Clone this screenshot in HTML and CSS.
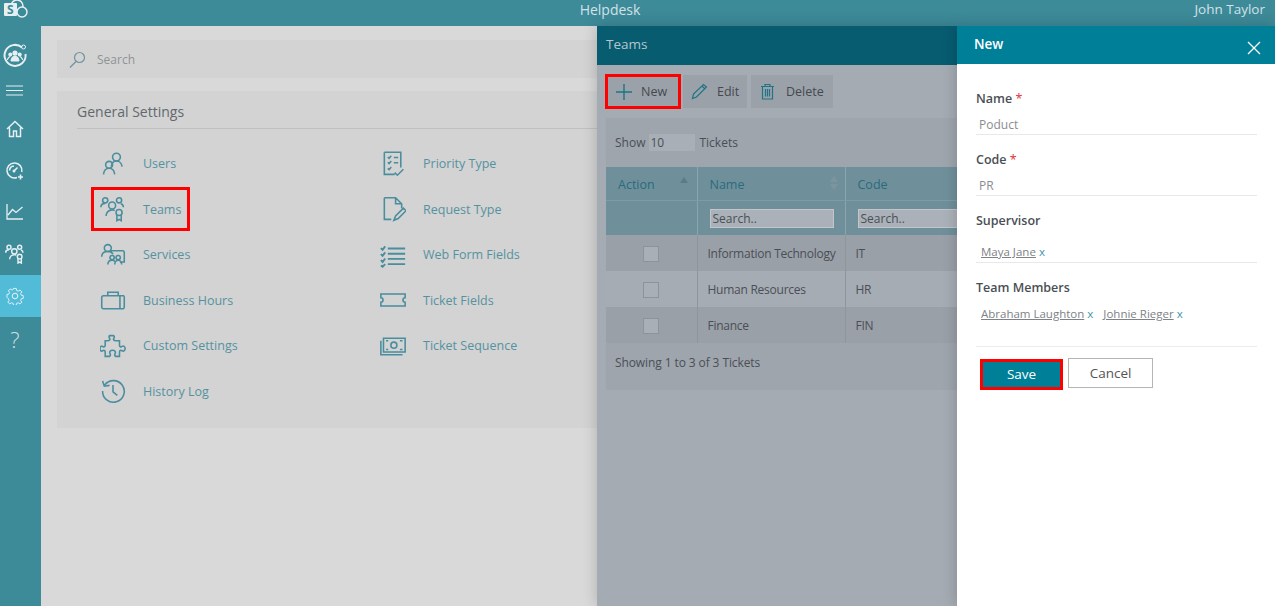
FILE: index.html
```html
<!DOCTYPE html>
<html>

<head>
    <link rel="stylesheet" href="styles.css">
</head>

<body>
    <header class="topbar">
        <svg class="logo" width="24" height="20" viewBox="0 0 24 20">
            <circle cx="13" cy="6" r="6" fill="none" stroke="#e6f0f2" stroke-width="1.500"/>
            <circle cx="18" cy="12" r="5" fill="#3d8a99" stroke="#e6f0f2" stroke-width="1.500"/>
            <rect x="0" y="3" width="13" height="13" rx="1" fill="#e6f0f2"/>
            <text x="3" y="14" class="logo-s">S</text>
        </svg>
        <span class="app-title">Helpdesk</span>
        <span class="user-name">John Taylor</span>
    </header>

    <div class="app">
        <nav class="sidebar">
            <a class="side-item side-profile">
                <svg width="26" height="26" viewBox="0 0 26 26">
                    <path d="M20 5.500A10.500 10.500 0 1 0 23.500 12" fill="none" stroke="#e6f0f2" stroke-width="2"/>
                    <circle cx="21.500" cy="5" r="2" fill="none" stroke="#e6f0f2"/>
                    <circle cx="13" cy="11" r="2.600" fill="#e6f0f2"/>
                    <circle cx="8.300" cy="12.500" r="2" fill="#e6f0f2"/>
                    <circle cx="17.700" cy="12.500" r="2" fill="#e6f0f2"/>
                    <path d="M9 19c0-3.500 2-5 4-5s4 1.500 4 5zM5.500 18c0-2 1-3.500 2.800-3.500M20.500 18c0-2-1-3.500-2.800-3.500" fill="#e6f0f2" stroke="#e6f0f2"/>
                </svg>
            </a>
            <a class="side-item side-menu">
                <svg width="18" height="11" viewBox="0 0 18 11"><path d="M0 1h17M0 5.500h17M0 10h17" stroke="#e6f0f2" fill="none"/></svg>
            </a>
            <a class="side-item">
                <svg width="18" height="18" viewBox="0 0 18 18"><path d="M1 9 9 1.500 17 9M3.500 7.500V16.500H7.500V11H10.500V16.500H14.500V7.500" fill="none" stroke="#e6f0f2" stroke-width="1.500"/></svg>
            </a>
            <a class="side-item">
                <svg width="20" height="20" viewBox="0 0 20 20"><path d="M12 16.500A7.500 7.500 0 1 1 16.800 11M4.500 9.500A5 5 0 0 1 9 5M9 10l3.500-3.500M15.500 13.500v5M13 16h5" fill="none" stroke="#e6f0f2" stroke-width="1.600"/><circle cx="9" cy="10" r="1.500" fill="#e6f0f2"/></svg>
            </a>
            <a class="side-item">
                <svg width="18" height="16" viewBox="0 0 18 16"><path d="M1 0V15H17M2 11 6.500 5.500 10 8.500 16.500 3" fill="none" stroke="#e6f0f2" stroke-width="1.300"/></svg>
            </a>
            <a class="side-item">
                <svg width="20" height="20" viewBox="0 0 30 30" class="icon-light"><use href="#i-teams"/></svg>
            </a>
            <a class="side-item active">
                <svg width="18" height="18" viewBox="0 0 18 18"><circle cx="9" cy="9" r="2.800" fill="none" stroke="#e6f5f8"/><path d="M7.500 1h3l.4 2.300 1.700.7 1.900-1.300 2 2-1.300 1.900.7 1.700 2.100.4v3l-2.100.4-.7 1.700 1.300 1.900-2 2-1.900-1.300-1.700.7-.4 2.100h-3l-.4-2.100-1.700-.7-1.900 1.300-2-2 1.300-1.900-.7-1.700L.5 10.500v-3l2.100-.4.7-1.700L2 3.500l2-2 1.900 1.300 1.200-.7z" transform="translate(.5 .5) scale(.93)" fill="none" stroke="#e6f5f8"/></svg>
            </a>
            <a class="side-item side-help">?</a>
        </nav>

        <main class="content">
            <div class="search-bar">
                <svg width="17" height="17" viewBox="0 0 17 17"><circle cx="10.500" cy="6.500" r="5" fill="none" stroke="#6f949d" stroke-width="1.200"/><path d="M7 10.500 1 16.500" stroke="#6f949d" fill="none" stroke-width="1.200"/></svg>
                <span>Search</span>
            </div>
            <section class="settings-card">
                <h2>General Settings</h2>
                <div class="settings-grid">
                    <a class="setting">
                        <svg viewBox="0 0 30 30"><circle cx="19" cy="7" r="4.500"/><path d="M13 18c.5-4 3-6.500 6-6.500s6 2.500 6.500 6.500"/><circle cx="10.500" cy="16" r="4"/><path d="M4 27c.5-4 3-7 6.500-7s6 3 6.500 7"/></svg>
                        <span>Users</span>
                    </a>
                    <a class="setting">
                        <svg viewBox="0 0 30 30"><use href="#i-priority"/></svg>
                        <span>Priority Type</span>
                    </a>
                    <a class="setting marked">
                        <svg viewBox="0 0 30 30"><use href="#i-teams"/></svg>
                        <span>Teams</span>
                    </a>
                    <a class="setting">
                        <svg viewBox="0 0 30 30"><path d="M5 2h13l7 7v5M5 2v25h8M18 2v7h7M16 28l2-5 9-9 3 3-9 9z"/></svg>
                        <span>Request Type</span>
                    </a>
                    <a class="setting">
                        <svg viewBox="0 0 30 30"><circle cx="9" cy="7" r="4"/><path d="M2 17c0-4 3-6 7-6 3 0 5 1 6 3M13 13V10h13a2 2 0 0 1 2 2v11h-5"/><circle cx="14" cy="18" r="2.500"/><circle cx="21" cy="18" r="2.500"/><path d="M9 26c0-3 2-5 5-5 2 0 3 1 3.500 2M17 26c0-3 2-5 4-5s4 2 4 5"/></svg>
                        <span>Services</span>
                    </a>
                    <a class="setting">
                        <svg viewBox="0 0 30 30"><path d="M1 7l2 2 3-4M1 14l2 2 3-4M1 21l2 2 3-4M1 27l2 1.500 3-3M9 7.500h20M9 13.500h20M9 19.500h20M9 25.500h20" stroke-width="2.200"/></svg>
                        <span>Web Form Fields</span>
                    </a>
                    <a class="setting">
                        <svg viewBox="0 0 30 30"><path d="M4 10h23a2 2 0 0 1 1 2v11a2 2 0 0 1-1 2H4a2 2 0 0 1-2-2V12a2 2 0 0 1 2-2zM9 10V6h12v4M23 10v15"/></svg>
                        <span>Business Hours</span>
                    </a>
                    <a class="setting">
                        <svg viewBox="0 0 30 30"><path d="M1 8h28v4.500a2.500 2.500 0 0 0 0 5V22H1v-4.500a2.500 2.500 0 0 0 0-5z"/></svg>
                        <span>Ticket Fields</span>
                    </a>
                    <a class="setting">
                        <svg viewBox="0 0 30 30"><path d="M11 3h4c1.500 0 2 1.500 1 3-1 1.500 0 3 2 3h4.500v5c0 2 1.500 2.500 3 1.500s3.500 0 3.500 2.500-2 3.500-3.500 2.500-3-.5-3 1.500v5H18c-1.500-1-1-2.500-.5-3.500 1-2-.5-3.500-3-3.500s-4 1.500-3 3.500c.5 1 1 2.500-.5 3.500H6v-5c0-2-1.500-2.500-3-1.500S0 20.500 0 18s2-3.500 3-2.500 3 .5 3-1.500V9h3c2 0 3-1.500 2-3-1-1.500-.5-3 0-3z"/></svg>
                        <span>Custom Settings</span>
                    </a>
                    <a class="setting">
                        <svg viewBox="0 0 30 30"><path d="M4 6h25v16H4zM1 9v16h25"/><circle cx="16" cy="14" r="3.500"/><path d="M7 9h2.500M7 19h2.500M23 9h3M23 19h3"/></svg>
                        <span>Ticket Sequence</span>
                    </a>
                    <a class="setting">
                        <svg viewBox="0 0 30 30"><path d="M5.500 8A12.500 12.500 0 1 1 3 15M3 3.500 5 9.500 11 8.500M15 8V16l5 4"/></svg>
                        <span>History Log</span>
                    </a>
                </div>
            </section>
        </main>
    </div>

    <aside class="drawer drawer-teams">
        <div class="drawer-head">Teams</div>
        <div class="toolbar">
            <button class="tool tool-new">
                <svg width="18" height="18" viewBox="0 0 18 18"><path d="M9 1V17M1 9H17" stroke="#1f7486" fill="none" stroke-width="1.400"/></svg>New
            </button>
            <button class="tool tool-edit">
                <svg width="17" height="17" viewBox="0 0 17 17"><path d="M1.500 15.500 2.500 11 12.500 1.500 15.500 4 5.500 14zM11 3l3 3" stroke="#1f7486" fill="none" stroke-width="1.200"/></svg>Edit
            </button>
            <button class="tool tool-delete">
                <svg width="15" height="17" viewBox="0 0 15 17"><path d="M1 3.500H14M5 3.500V1.500H10V3.500M2.500 3.500V16H12.500V3.500M5.500 6V13.500M7.500 6V13.500M9.500 6V13.500" stroke="#1f7486" fill="none" stroke-width="1.200"/></svg>Delete
            </button>
        </div>
        <div class="grid-box">
            <div class="grid-show">Show <span class="page-size">10</span> Tickets</div>
            <table class="grid">
                <thead>
                    <tr class="grid-titles">
                        <th class="col-action">Action<i class="sort-up"></i></th>
                        <th class="col-name">Name<i class="sort-both"></i></th>
                        <th>Code</th>
                    </tr>
                    <tr class="grid-filters">
                        <th></th>
                        <th><span class="filter">Search..</span></th>
                        <th><span class="filter">Search..</span></th>
                    </tr>
                </thead>
                <tbody>
                    <tr><td><i class="check"></i></td><td>Information Technology</td><td>IT</td></tr>
                    <tr><td><i class="check"></i></td><td>Human Resources</td><td>HR</td></tr>
                    <tr><td><i class="check"></i></td><td>Finance</td><td>FIN</td></tr>
                </tbody>
            </table>
            <div class="grid-foot">Showing 1 to 3 of 3 Tickets</div>
        </div>
    </aside>

    <aside class="drawer drawer-new">
        <div class="drawer-head">
            New
            <svg width="14" height="14" viewBox="0 0 14 14"><path d="M1 1 13 13M13 1 1 13" stroke="#fff" stroke-width="1.300" fill="none"/></svg>
        </div>
        <form class="new-form">
            <div class="field">
                <label>Name <b>*</b></label>
                <div class="value">Poduct</div>
            </div>
            <div class="field">
                <label>Code <b>*</b></label>
                <div class="value">PR</div>
            </div>
            <div class="field field-people">
                <label>Supervisor</label>
                <div class="value"><u>Maya Jane</u> <em>x</em></div>
            </div>
            <div class="field field-members">
                <label>Team Members</label>
                <div class="value"><u>Abraham Laughton</u> <em>x</em><u class="next">Johnie Rieger</u> <em>x</em></div>
            </div>
            <div class="form-actions">
                <button type="button" class="btn-save">Save</button>
                <button type="button" class="btn-cancel">Cancel</button>
            </div>
        </form>
    </aside>

    <svg class="defs" width="0" height="0">
        <symbol id="i-teams" viewBox="0 0 30 30">
            <circle cx="6" cy="5" r="3"/><circle cx="22" cy="5" r="3"/><circle cx="14" cy="11" r="4"/>
            <path d="M1 13c0-3 2-4.500 5-4.500M27 13c0-2-1-3.500-3-4M7 23c0-4 3-7 7-7 1 0 2 .2 3 .6"/>
            <circle cx="22" cy="19" r="3.500"/><path d="M19.500 22v6.500L22 27l2.500 1.500V22"/>
        </symbol>
        <symbol id="i-priority" viewBox="0 0 30 30">
            <path d="M5 1.500H24V19M5 1.500V27H17M9 7l1.500 1.500L13 5.500M9 13l1.500 1.500L13 11.500M9 20l1.500 1.500L13 18.500M16 7.500h5M16 13.500h5M17 25l3 3 7-7"/>
        </symbol>
    </svg>
</body>

</html>
```

FILE: styles.css
```css
* {
    box-sizing: border-box;
}

html,
body {
    margin: 0;
    height: 606px;
    overflow: hidden;
}

body {
    font-family: "Open Sans", "Noto Sans", sans-serif;
    font-size: 12.5px;
    color: #4a4f55;
    display: flex;
    flex-direction: column;
}

/* top bar */
.topbar {
    height: 26px;
    flex: none;
    background: #3d8a99;
    color: #d3e2e6;
    font-size: 14px;
    display: flex;
    align-items: center;
    justify-content: center;
    padding-bottom: 8px;
    position: relative;
}

.logo {
    position: absolute;
    left: 4px;
    top: 0;
}

.logo-s {
    font-size: 12px;
    font-weight: 700;
    fill: #3d8a99;
}

.app-title {
    margin-right: 55px;
}

.user-name {
    position: absolute;
    right: 10px;
    top: 0;
    font-size: 13.500px;
}

/* page behind the drawers */
.app {
    flex: 1;
    display: flex;
    min-height: 0;
}

.sidebar {
    width: 41px;
    flex: none;
    background: #3d8a99;
    display: flex;
    flex-direction: column;
    padding-top: 8px;
}

.side-item {
    height: 41.750px;
    flex: none;
    display: flex;
    align-items: center;
    justify-content: center;
    padding-right: 11px;
}

.side-profile {
    height: 42px;
}

.side-menu {
    height: 28px;
    margin-bottom: 4px;
}

.icon-light {
    fill: none;
    stroke: #e6f0f2;
    stroke-width: 2.200;
}

.side-item.active {
    background: #52bcd8;
}

.side-help {
    color: #cfe0e4;
    font-size: 22px;
    font-weight: 300;
    padding-top: 3px;
}

.content {
    flex: 1;
    background: #d9d9d9;
    padding: 14px 0 0 16px;
    display: flex;
    flex-direction: column;
    gap: 13px;
}

.search-bar {
    height: 38px;
    background: #d3d3d3;
    display: flex;
    align-items: center;
    gap: 11px;
    padding-left: 12px;
    color: #8e9496;
    font-size: 12px;
}

.settings-card {
    height: 337px;
    background: #d3d3d3;
    padding: 0 0 0 20px;
}

.settings-card h2 {
    margin: 0;
    height: 38px;
    line-height: 41px;
    font-size: 14px;
    font-weight: 400;
    color: #62686c;
    border-bottom: 1px solid #bfc1c1;
}

.settings-grid {
    display: grid;
    grid-template-columns: 280px 200px;
    grid-auto-rows: 45.500px;
    margin-top: 12.500px;
}

.setting {
    display: flex;
    align-items: center;
    gap: 17px;
    padding-left: 9px;
    color: #5592a1;
    height: 44px;
    width: 99px;
    margin-left: 14px;
    white-space: nowrap;
}

.setting svg {
    width: 26px;
    height: 26px;
    flex: none;
    fill: none;
    stroke: #4a8d9d;
    stroke-width: 1.800;
}

.setting.marked {
    outline: 3px solid #f00;
    outline-offset: -3px;
}

/* drawers lie over the page */
.drawer {
    position: absolute;
    top: 26px;
    bottom: 0;
    box-shadow: 0 0 14px rgba(0, 0, 0, .2);
}

.drawer-head {
    height: 39px;
    padding-left: 9px;
    line-height: 36px;
    font-size: 13.500px;
}

.drawer-teams {
    left: 597px;
    width: 360px;
    background: #a5abb3;
    overflow: hidden;
}

.drawer-teams .drawer-head {
    background: #075c70;
    color: #b5c7cc;
}

.toolbar {
    display: flex;
    gap: 3px;
    margin: 10px 0 10px 9px;
    height: 33px;
}

.tool {
    border: 0;
    background: #9ba1a9;
    color: #44494f;
    font: inherit;
    display: flex;
    align-items: center;
    height: 33px;
}

.tool-new {
    width: 74px;
    padding: 0 0 0 9px;
    gap: 8px;
    outline: 3px solid #f00;
    outline-offset: -2px;
}

.tool-edit {
    width: 64px;
    padding: 0 0 0 8px;
    gap: 9px;
}

.tool-delete {
    width: 82px;
    margin-left: 1px;
    padding: 0 0 0 9px;
    gap: 11px;
}

.grid-box {
    margin-left: 9px;
    background: #9ea5ad;
    height: 272px;
    font-size: 12px;
}

.grid-show {
    height: 49px;
    padding-left: 9px;
    display: flex;
    align-items: center;
    gap: 4px;
}

.page-size {
    width: 46px;
    height: 17px;
    line-height: 17px;
    background: #a9afb6;
    padding-left: 1px;
}

.grid {
    border-collapse: collapse;
    table-layout: fixed;
    width: 351px;
}

.grid th {
    font-weight: 400;
    text-align: left;
    background: #6f909b;
    color: #2a6b7c;
    padding: 0 0 0 12px;
    position: relative;
    border-right: 1px solid #8aa5ae;
}

.grid td {
    height: 36px;
    padding: 0 0 0 10px;
    border-right: 1px solid #8f959d;
    white-space: nowrap;
    letter-spacing: -.25px;
}

.grid tr:nth-child(odd) td {
    background: #9aa0a8;
}

.grid tr:nth-child(even) td {
    background: #a6acb4;
}

.grid td:first-child {
    text-align: center;
    padding: 0;
}

.grid th:last-child,
.grid td:last-child {
    border-right: 0;
}

.col-action {
    width: 91px;
}

.col-name {
    width: 148px;
}

.grid-titles th {
    height: 33px;
    font-size: 12.500px;
    padding-top: 2px;
    border-bottom: 1px solid #7f9ca6;
}

.grid-filters th {
    height: 35px;
}

.filter {
    display: block;
    width: 124px;
    height: 19px;
    line-height: 17px;
    margin-top: 2px;
    background: #abb1b8;
    border: 1px solid #c2c6cb;
    padding-left: 2px;
    color: #4a4f55;
    font-size: 12px;
}

.grid-filters th:last-child .filter {
    width: 140px;
}

.sort-up,
.sort-both {
    position: absolute;
    right: 9px;
    top: 10px;
    width: 0;
    height: 0;
    border: 4px solid transparent;
    border-top: 0;
    border-bottom: 6px solid #5d7b85;
}

.sort-both::after {
    content: "";
    position: absolute;
    left: -4px;
    top: 8px;
    border: 4px solid transparent;
    border-bottom: 0;
    border-top: 6px solid #7e949c;
}

.sort-both {
    border-bottom-color: #7e949c;
    right: 7px;
    top: 9px;
}

.check {
    display: inline-block;
    width: 16px;
    height: 16px;
    background: #a9afb6;
    border: 1px solid #8d939b;
    vertical-align: middle;
}

.grid-foot {
    padding: 11px 0 0 9px;
    letter-spacing: -.1px;
}

.drawer-new {
    left: 957px;
    right: 0;
    background: #fff;
}

.drawer-new .drawer-head {
    height: 38px;
    background: #007f99;
    color: #fff;
    padding-left: 17px;
    font-weight: 600;
    position: relative;
}

.drawer-new .drawer-head svg {
    position: absolute;
    right: 14px;
    top: 15px;
}

.new-form {
    padding: 25px 18px 0 19px;
}

.field {
    height: 61px;
}

.field label {
    display: block;
    height: 20px;
    line-height: 20px;
    font-weight: 600;
    color: #4a4f55;
}

.field b {
    color: #e0303a;
    font-weight: 400;
}

.value {
    height: 26px;
    line-height: 31px;
    padding: 0 0 0 3px;
    color: #8a8d90;
    font-size: 12px;
    border-bottom: 1px solid #e8e8e8;
    white-space: nowrap;
}

.field-people {
    height: 67px;
}

.field-people .value {
    height: 32px;
    line-height: 41px;
    padding-left: 5px;
    font-size: 11.500px;
}

.value u {
    color: #7d8286;
}

.value em {
    font-style: normal;
    color: #3f94a6;
}

.value .next {
    margin-left: 10px;
}

.field-members {
    height: 68px;
}

.field-members .value {
    line-height: 31px;
    padding-left: 5px;
    font-size: 11.500px;
    border-bottom: 0;
}

.form-actions {
    border-top: 1px solid #ececec;
    padding: 11px 0 0 6px;
    display: flex;
    gap: 7px;
    align-items: flex-start;
}

.btn-save,
.btn-cancel {
    font: inherit;
    font-size: 13.500px;
}

.btn-save {
    width: 79px;
    height: 27px;
    margin-top: 3px;
    padding: 0 0 2px;
    background: #007f99;
    color: #fff;
    border: 0;
    outline: 3px solid #f00;
    outline-offset: -1px;
}

.btn-cancel {
    width: 85px;
    height: 30px;
    background: #fff;
    color: #555;
    border: 1px solid #b5b5b5;
}

.defs {
    position: absolute;
}
```
